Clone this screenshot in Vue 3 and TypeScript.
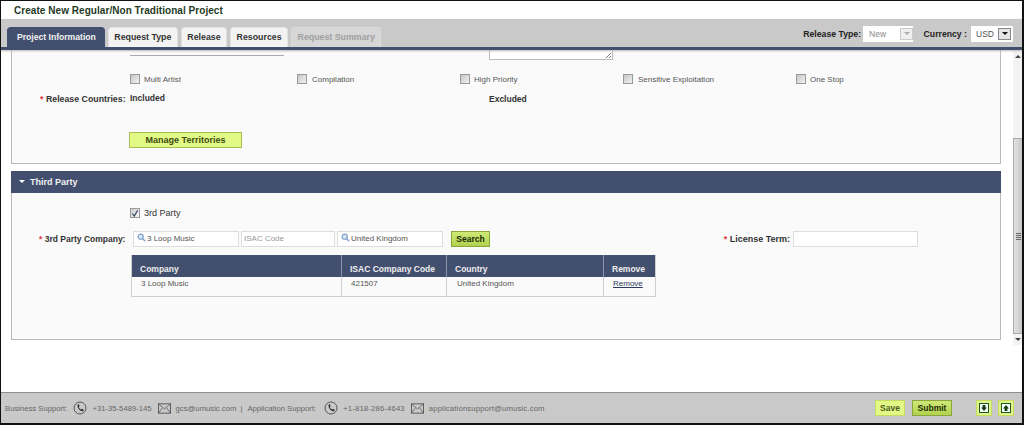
<script setup lang="ts">
const tabs = [
  { label: 'Project Information', cls: 'active' },
  { label: 'Request Type', cls: '' },
  { label: 'Release', cls: '' },
  { label: 'Resources', cls: '' },
  { label: 'Request Summary', cls: 'disabled' },
]
const checks = [
  { label: 'Multi Artist', w: 167 },
  { label: 'Compilation', w: 163 },
  { label: 'High Priority', w: 163 },
  { label: 'Sensitive Exploitation', w: 173 },
  { label: 'One Stop', w: 80 },
]
</script>

<template>
  <div class="app">
    <div class="title">Create New Regular/Non Traditional Project</div>
    <div class="toolbar">
      <div class="tabs">
        <div v-for="t in tabs" :key="t.label" class="tab" :class="t.cls">{{ t.label }}</div>
      </div>
      <div class="selects">
        <span class="sel-label">Release Type:</span>
        <div class="select s-release">
          <span class="dim">New</span>
          <span class="arrow off"><i></i></span>
        </div>
        <span class="sel-label cur">Currency :</span>
        <div class="select s-cur">
          <span>USD</span>
          <span class="arrow"><i></i></span>
        </div>
      </div>
    </div>

    <div class="middle">
      <div class="content">
        <section class="panel p1">
          <div class="top-lines">
            <div class="line"></div>
            <div class="textarea">
              <svg width="7" height="7" viewBox="0 0 7 7"><path d="M1 6L6 1M4 6L6 4" stroke="#777" stroke-width="1" /></svg>
            </div>
          </div>
          <div class="checks">
            <label v-for="c in checks" :key="c.label" class="check" :style="{ width: c.w + 'px' }">
              <span class="box"></span>{{ c.label }}
            </label>
          </div>
          <div class="countries">
            <span class="field-label"><b>*</b> Release Countries:</span>
            <span class="inc">Included</span>
            <span class="exc">Excluded</span>
          </div>
          <div class="manage">Manage Territories</div>
        </section>

        <section class="third">
          <header class="third-head"><i class="caret"></i>Third Party</header>
          <div class="third-body">
            <div class="party-check">
              <span class="box checked">
                <svg width="9" height="9" viewBox="0 0 9 9"><path d="M1.5 4.5L3.6 7.5L7.5 1" fill="none" stroke="#3d4a6b" stroke-width="1.4" /></svg>
              </span>
              3rd Party
            </div>
            <div class="company-row">
              <span class="field-label company-label"><b>*</b> 3rd Party Company:</span>
              <div class="input i-company">
                <svg class="lens" width="9" height="9" viewBox="0 0 11 11"><circle cx="4.5" cy="4.5" r="3.2" fill="#dbe6f5" stroke="#7f9fcb" stroke-width="1.4" /><path d="M7 7L10 10" stroke="#7f9fcb" stroke-width="1.7" /></svg>
                3 Loop Music
              </div>
              <div class="input i-isac ph">ISAC Code</div>
              <div class="input i-country">
                <svg class="lens" width="9" height="9" viewBox="0 0 11 11"><circle cx="4.5" cy="4.5" r="3.2" fill="#dbe6f5" stroke="#7f9fcb" stroke-width="1.4" /><path d="M7 7L10 10" stroke="#7f9fcb" stroke-width="1.7" /></svg>
                United Kingdom
              </div>
              <div class="search">Search</div>
              <span class="field-label license"><b>*</b> License Term:</span>
              <div class="input i-license"></div>
            </div>
            <table class="grid">
              <thead>
                <tr>
                  <th class="c1">Company</th>
                  <th class="c2">ISAC Company Code</th>
                  <th class="c3">Country</th>
                  <th class="c4">Remove</th>
                </tr>
              </thead>
              <tbody>
                <tr>
                  <td class="c1">3 Loop Music</td>
                  <td class="c2">421507</td>
                  <td class="c3">United Kingdom</td>
                  <td class="c4"><a>Remove</a></td>
                </tr>
              </tbody>
            </table>
          </div>
        </section>
      </div>
      <div class="scrollbar">
        <div class="sb-arrow up"></div>
        <div class="sb-track">
          <div class="sb-thumb"><span class="grip"></span></div>
        </div>
        <div class="sb-arrow down"></div>
      </div>
    </div>

    <footer class="footer">
      <div class="support">
        <span>Business Support:</span>
        <svg class="phone" width="14" height="14" viewBox="0 0 14 14"><circle cx="7" cy="7" r="6" fill="none" stroke="#555" stroke-width="1" /><path d="M4.6 3.4L6 3.2L6.6 5.3L5.8 6C6.2 7 7 7.9 8 8.4L8.9 7.7L10.7 8.8L10.3 10.2C8 10.8 3.8 7.4 4.6 3.4Z" fill="#333" /></svg>
        <span>+31-35-5489-145</span>
        <svg class="mail" width="13" height="11" viewBox="0 0 14 11"><rect x=".5" y=".5" width="13" height="10" fill="none" stroke="#555" /><path d="M.5 .5L7 6L13.5 .5M.5 10.5L5 4.5M13.5 10.5L9 4.5" fill="none" stroke="#555" stroke-width=".8" /></svg>
        <span>gcs@umusic.com</span>
        <span class="pipe">|</span>
        <span>Application Support:</span>
        <svg class="phone second" width="14" height="14" viewBox="0 0 14 14"><circle cx="7" cy="7" r="6" fill="none" stroke="#555" stroke-width="1" /><path d="M4.6 3.4L6 3.2L6.6 5.3L5.8 6C6.2 7 7 7.9 8 8.4L8.9 7.7L10.7 8.8L10.3 10.2C8 10.8 3.8 7.4 4.6 3.4Z" fill="#333" /></svg>
        <span class="wide">+1-818-286-4643</span>
        <svg class="mail" width="13" height="11" viewBox="0 0 14 11"><rect x=".5" y=".5" width="13" height="10" fill="none" stroke="#555" /><path d="M.5 .5L7 6L13.5 .5M.5 10.5L5 4.5M13.5 10.5L9 4.5" fill="none" stroke="#555" stroke-width=".8" /></svg>
        <span class="wide">applicationsupport@umusic.com</span>
      </div>
      <div class="actions">
        <div class="btn save">Save</div>
        <div class="btn submit">Submit</div>
        <div class="sq first">
          <svg width="10" height="10" viewBox="0 0 10 10"><rect x=".5" y=".5" width="9" height="9" fill="#fff" stroke="#1c5a1c" /><path d="M3.6 2H6.4V4.5H8L5 8L2 4.5H3.6Z" fill="#123f12" /></svg>
        </div>
        <div class="sq">
          <svg width="10" height="10" viewBox="0 0 10 10"><rect x=".5" y=".5" width="9" height="9" fill="#fff" stroke="#1c5a1c" /><path d="M3.6 8H6.4V5.5H8L5 2L2 5.5H3.6Z" fill="#123f12" /></svg>
        </div>
      </div>
    </footer>
  </div>
</template>

<style>
html, body { margin: 0; background: #fff; }
</style>

<style scoped>
.app {
  width: 1024px;
  height: 425px;
  box-sizing: border-box;
  border: 1px solid #111;
  border-width: 1px 2px 2px 1px;
  display: flex;
  flex-direction: column;
  overflow: hidden;
  background: #fff;
  font-family: "Liberation Sans", Arial, sans-serif;
  font-size: 9px;
  color: #444;
}
.title {
  height: 18px;
  flex: none;
  box-sizing: border-box;
  padding: 3px 0 0 13px;
  font-size: 10px;
  font-weight: bold;
  color: #1f3a1f;
  line-height: 13px;
  letter-spacing: 0.05px;
}
.toolbar {
  height: 31px;
  flex: none;
  box-sizing: border-box;
  background: #c9c9c9;
  border-bottom: 3px solid #434f6e;
  box-shadow: 0 1px 2px #bbb;
  display: flex;
  justify-content: space-between;
  position: relative;
}
.tabs {
  display: flex;
  gap: 3px;
  padding: 8px 0 0 6px;
}
.tab {
  height: 20px;
  box-sizing: border-box;
  padding: 0 5.5px;
  background: #f3f3f3;
  border: 1px solid #e2e2e2;
  border-bottom: 0;
  border-radius: 4px 4px 0 0;
  font-size: 8.8px;
  font-weight: bold;
  color: #333;
  line-height: 19px;
}
.tab.active {
  background: #434f6e;
  border-color: #434f6e;
  color: #f2f2f2;
  font-size: 8.6px;
  padding: 0 8px 0 9px;
}
.tab.disabled {
  background: #d6d6d6;
  border-color: #dcdcdc;
  color: #a0a0a0;
}
.selects {
  display: flex;
  align-items: center;
  padding: 0 9px 0 0;
  height: 29px;
}
.sel-label {
  font-size: 8.7px;
  font-weight: bold;
  color: #222;
  margin-right: 2px;
}
.sel-label.cur { margin-left: 10.5px; margin-right: 4px; }
.select {
  height: 16px;
  box-sizing: border-box;
  background: #fff;
  display: flex;
  align-items: center;
  justify-content: space-between;
  padding: 0 2px 0 5px;
  font-size: 8.5px;
  color: #555;
}
.s-release { width: 50px; padding: 0 0 0 6px; }
.s-cur { width: 42px; }
.dim { color: #888; }
.arrow {
  width: 13px;
  height: 12px;
  box-sizing: border-box;
  background: #e4e4e4;
  border: 1px solid #888;
  display: flex;
  align-items: center;
  justify-content: center;
}
.arrow.off { border-color: #ccc; background: #efefef; }
.arrow i {
  width: 0;
  height: 0;
  border: 3px solid transparent;
  border-top: 3px solid #111;
  border-bottom: 0;
}
.arrow.off i { border-top-color: #aaa; }
.middle {
  flex: 1;
  display: flex;
  min-height: 0;
  align-items: flex-start;
}
.content {
  width: 1000px;
  flex: none;
  padding-left: 10px;
  box-sizing: border-box;
}
.panel.p1 {
  height: 114px;
  box-sizing: border-box;
  background: #fafafa;
  border: 1px solid #b9b9b9;
  border-top: 0;
}
.top-lines {
  display: flex;
  height: 11px;
  padding-left: 118px;
}
.line {
  width: 154px;
  height: 5px;
  border-bottom: 1px solid #aaa;
}
.textarea {
  margin-left: 205px;
  width: 124px;
  height: 10px;
  box-sizing: border-box;
  border: 1px solid #bbb;
  border-top: 0;
  background: #fff;
  display: flex;
  justify-content: flex-end;
  align-items: flex-end;
}
.checks {
  display: flex;
  padding: 12px 0 0 118px;
}
.check {
  display: flex;
  align-items: center;
  font-size: 8px;
  color: #555;
  height: 12px;
}
.box {
  width: 10px;
  height: 10px;
  box-sizing: border-box;
  border: 1px solid #9a9a9a;
  background: linear-gradient(135deg, #c6c6c6, #f2f2f2);
  margin-right: 4px;
  flex: none;
  display: inline-flex;
  align-items: center;
  justify-content: center;
}
.check:nth-child(even) .box { margin-right: 5px; }
.box.checked { background: linear-gradient(135deg, #cfcfcf, #f7f7f7); }
.countries {
  display: flex;
  align-items: center;
  margin-top: 8px;
  height: 12px;
}
.field-label {
  font-weight: bold;
  color: #333;
  flex: none;
}
.field-label b { color: #d33; }
.countries .field-label { font-size: 8.8px; width: 118px; box-sizing: border-box; padding-left: 28px; white-space: nowrap; }
.inc { width: 359px; color: #333; font-weight: bold; font-size: 8.5px; flex: none; align-self: flex-start; }
.exc { color: #333; font-weight: bold; font-size: 8.5px; }
.manage {
  width: 113px;
  height: 16px;
  box-sizing: border-box;
  margin: 27px 0 0 117px;
  background: #e2f985;
  border: 1px solid #a9bd53;
  color: #3c4a14;
  font-weight: bold;
  text-align: center;
  line-height: 14px;
}
.third { margin-top: 7px; }
.third-head {
  height: 22px;
  box-sizing: border-box;
  background: #434f6e;
  color: #f2f2f2;
  font-weight: bold;
  padding: 0 0 1px 8px;
  display: flex;
  align-items: center;
  gap: 5px;
}
.caret {
  width: 0;
  height: 0;
  border: 3px solid transparent;
  border-top: 3px solid #fff;
  border-bottom: 0;
}
.third-body {
  height: 147px;
  box-sizing: border-box;
  background: #fafafa;
  border: 1px solid #b9b9b9;
  border-top: 0;
  padding-top: 14px;
}
.party-check {
  display: flex;
  align-items: center;
  height: 12px;
  padding-left: 118px;
  color: #333;
}
.company-row {
  display: flex;
  align-items: center;
  height: 17px;
  margin-top: 11px;
}
.company-label { font-size: 8.5px; width: 121px; box-sizing: border-box; padding-left: 27px; white-space: nowrap; }
.input {
  height: 16px;
  box-sizing: border-box;
  background: #fff;
  border: 1px solid #ddd;
  display: flex;
  align-items: center;
  font-size: 8px;
  color: #555;
  padding-left: 3px;
  flex: none;
}
.lens { flex: none; margin-top: -2px; margin-right: 1px; }
.i-company { width: 106px; }
.i-isac { width: 94px; margin-left: 2px; padding-left: 2px; }
.i-country { width: 106px; margin-left: 2px; }
.ph { color: #999; }
.search {
  width: 39px;
  height: 16px;
  box-sizing: border-box;
  margin-left: 8px;
  background: linear-gradient(#cfe877, #b1d24f);
  border: 1px solid #8aa63a;
  color: #1c2d08;
  font-weight: bold;
  text-align: center;
  line-height: 14px;
  font-size: 8.5px;
}
.license { width: 300px; text-align: right; box-sizing: border-box; white-space: nowrap; margin-right: 3px; }
.i-license { width: 125px; }
.grid {
  border-collapse: collapse;
  margin: 8px 0 0 119px;
  width: 525px;
  table-layout: fixed;
  background: #fafafa;
  border: 1px solid #cfcfcf;
  border-top: 0;
}
.grid th {
  height: 22px;
  padding: 6px 0 0 8px;
  box-sizing: border-box;
  background: #434f6e;
  color: #eee;
  font-size: 8.5px;
  font-weight: bold;
  text-align: left;
  border-left: 1px solid #8c95aa;
}
.grid th.c1 { border-left: 0; }
.grid td {
  height: 19px;
  box-sizing: border-box;
  vertical-align: top;
  padding: 2px 0 0 9px;
  font-size: 8px;
  color: #555;
  border-left: 1px solid #cfcfcf;
  border-bottom: 1px solid #cfcfcf;
}
.grid td.c3 { padding-left: 10px; }
.grid .c1 { width: 210px; }
.grid .c2 { width: 105px; }
.grid .c3 { width: 157px; }
.grid a { color: #2c3a5e; text-decoration: underline; }
.scrollbar {
  width: 10px;
  height: 295px;
  margin-left: 12px;
  flex: none;
  display: flex;
  flex-direction: column;
  background: #f3f3f3;
}
.sb-arrow { height: 13px; display: flex; justify-content: center; flex: none; }
.sb-arrow.down { height: 11px; }
.sb-arrow.up::before {
  content: "";
  margin-top: 5px;
  border: 3px solid transparent;
  border-top: 0;
  border-bottom: 3px solid #444;
  height: 0;
}
.sb-arrow.down::before {
  content: "";
  margin-top: 4px;
  border: 3px solid transparent;
  border-bottom: 0;
  border-top: 3px solid #444;
  height: 0;
}
.sb-track { flex: 1; display: flex; flex-direction: column; justify-content: flex-end; }
.sb-thumb {
  height: 196px;
  box-sizing: border-box;
  background: linear-gradient(90deg, #e2e2e2, #c6c6c6);
  border: 1px solid #aaa;
  display: flex;
  align-items: center;
  justify-content: center;
}
.grip {
  width: 5px;
  height: 7px;
  background: repeating-linear-gradient(#666 0 1px, transparent 1px 2px);
}
.footer {
  margin-top: auto;
  height: 31px;
  flex: none;
  box-sizing: border-box;
  background: #c9c9c9;
  border-top: 1px solid #8f8f8f;
  display: flex;
  align-items: center;
  justify-content: space-between;
  font-size: 7.7px;
  color: #666;
  padding: 0 8px 0 4px;
}
.support { display: flex; align-items: center; }
.phone { margin: 0 5px 0 6px; }
.phone.second { margin-left: 8px; }
.mail { margin: 0 5px 0 6px; }
.pipe { margin: 0 5px 0 4px; }
.wide { letter-spacing: 0.16px; }
.actions { display: flex; align-items: center; }
.btn {
  height: 16px;
  box-sizing: border-box;
  font-size: 8.5px;
  font-weight: bold;
  text-align: center;
  line-height: 14px;
}
.save {
  width: 30px;
  background: #e2f985;
  border: 1px solid #c5dc60;
  color: #4c5a22;
}
.submit {
  width: 40px;
  margin-left: 7px;
  background: linear-gradient(#cfe877, #b1d24f);
  border: 1px solid #8aa63a;
  color: #1c2d08;
}
.sq {
  width: 16px;
  height: 16px;
  box-sizing: border-box;
  background: #dff58a;
  border: 1px solid #c5dc60;
  margin-left: 6px;
  display: flex;
  align-items: center;
  justify-content: center;
}
.sq.first { margin-left: 24px; }
</style>
